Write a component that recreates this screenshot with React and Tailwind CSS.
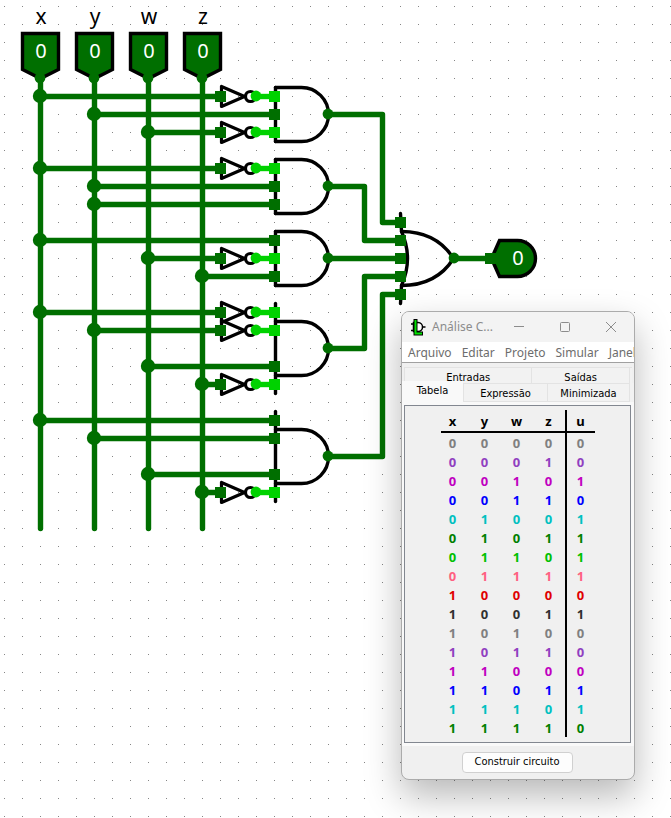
import React from "react";

const DARK = "#006f00";
const LIGHT = "#00d200";

const inputs = [
  { name: "x", x: 40 },
  { name: "y", x: 94 },
  { name: "w", x: 148 },
  { name: "z", x: 202 },
];

const gates = [
  { y: 114, from: 87, to: 141, pins: [["x", 96, true], ["y", 114, false], ["w", 132, true]] },
  { y: 186, from: 159, to: 213, pins: [["x", 168, true], ["y", 186, false], ["y", 204, false]] },
  { y: 258, from: 231, to: 285, pins: [["x", 240, false], ["w", 258, true], ["z", 276, false]] },
  { y: 348, from: 303, to: 393, pins: [["x", 312, true], ["y", 330, true], ["w", 366, false], ["z", 384, true]] },
  { y: 456, from: 411, to: 501, pins: [["x", 420, false], ["y", 438, false], ["w", 474, false], ["z", 492, true]] },
];

const links = [
  "M328 114H382V222H400",
  "M328 186H364V240H400",
  "M328 258H400",
  "M328 348H364V276H400",
  "M328 456H382V294H400",
  "M454 258H490",
];

const columnX = { x: 40, y: 94, w: 148, z: 202 };

function Pin({ x, y, color = DARK }) {
  return <rect x={x - 5} y={y - 5} width="11" height="11" fill={color} />;
}

function Inverter({ y }) {
  return (
    <g>
      <path d={`M221 ${y - 10}V${y + 10}L244 ${y}Z`} fill="none" stroke="#000" strokeWidth="3.2" strokeLinejoin="round" />
      <circle cx="250" cy={y} r="5" fill="none" stroke="#000" strokeWidth="3.2" />
    </g>
  );
}

function Circuit() {
  return (
    <svg className="block h-screen min-h-[818px] w-full" role="img" aria-label="Circuito">
      <defs>
        <pattern id="grid" width="18" height="18" patternUnits="userSpaceOnUse">
          <rect x="4" y="6" width="1" height="1" fill="#858585" />
        </pattern>
      </defs>
      <rect width="100%" height="100%" fill="#fff" />
      <rect width="100%" height="100%" fill="url(#grid)" />
      <g transform="translate(0.5 0.5)">
        <g fill="none" stroke="#000" strokeWidth="3.4" strokeLinecap="round" strokeLinejoin="round">
          {gates.map((g) => (
            <g key={g.y}>
              <path d={`M275 ${g.from}V${g.to}`} />
              <path d={`M275 ${g.y - 27}H301A27 27 0 0 1 301 ${g.y + 27}H275`} />
            </g>
          ))}
          <path d="M401 231Q436 231 453 258Q436 285 401 285" />
          <path d="M400 213L401 231Q413 258 401 285L400 303" />
        </g>
        {gates.map((g) => g.pins.filter((p) => p[2]).map((p) => <Inverter key={p[1]} y={p[1]} />))}
        {inputs.map((i) => (
          <path
            key={i.name}
            d={`M${i.x - 18} 33H${i.x + 18}V69L${i.x} 78L${i.x - 18} 69Z`}
            fill={DARK}
            stroke="#000"
            strokeWidth="3.4"
          />
        ))}
        <path d="M491 258L499 240H517A18 18 0 0 1 517 276H499Z" fill={DARK} stroke="#000" strokeWidth="3.4" />
        <g fill="none" stroke={DARK} strokeWidth="5.4" strokeLinecap="round" strokeLinejoin="round">
          {inputs.map((i) => (
            <path key={i.name} d={`M${i.x} 78V528`} />
          ))}
          {links.map((d) => (
            <path key={d} d={d} />
          ))}
          {gates.map((g) =>
            g.pins.map(([src, y, inverted]) => (
              <path key={y} d={`M${columnX[src]} ${y}H${inverted ? 220 : 274}`} />
            ))
          )}
        </g>
      </g>
      {inputs.map((i) => (
        <circle key={i.name} cx={i.x} cy="78" r="5.4" fill={DARK} />
      ))}
      {gates.map((g) => (
        <g key={g.y}>
          {g.pins.map(([src, y, inverted]) => (
            <g key={y}>
              <circle cx={columnX[src]} cy={y} r="7.2" fill={DARK} />
              {inverted && (
                <g>
                  <Pin x={220} y={y} />
                  <path d={`M256 ${y + 0.5}H274`} stroke={LIGHT} strokeWidth="5.4" />
                  <circle cx="256" cy={y} r="5.4" fill={LIGHT} />
                </g>
              )}
              <Pin x={274} y={y} color={inverted ? LIGHT : DARK} />
            </g>
          ))}
          <circle cx="328" cy={g.y} r="5.4" fill={DARK} />
        </g>
      ))}
      {[222, 240, 258, 276, 294].map((y) => (
        <Pin key={y} x={400} y={y} />
      ))}
      <circle cx="454" cy="258" r="5.4" fill={DARK} />
      <Pin x={490} y={258} />
      <g className="font-['Noto_Sans',sans-serif] text-[21px]" textAnchor="middle">
        {inputs.map((i) => (
          <g key={i.name}>
            <text x={i.x + 1} y="24">{i.name}</text>
            <text x={i.x + 1} y="58" fill="#fff" className="text-[20px]">0</text>
          </g>
        ))}
        <text x="518" y="265" fill="#fff" className="text-[20px]">0</text>
      </g>
    </svg>
  );
}

const rows = [
  ["00000", "text-[#808080]"],
  ["00010", "text-[#9040c0]"],
  ["00101", "text-[#c000c0]"],
  ["00110", "text-[#0000ff]"],
  ["01001", "text-[#00c0c0]"],
  ["01011", "text-[#008000]"],
  ["01101", "text-[#00c000]"],
  ["01111", "text-[#ff6080]"],
  ["10000", "text-[#e00000]"],
  ["10011", "text-[#303030]"],
  ["10100", "text-[#808080]"],
  ["10110", "text-[#9040c0]"],
  ["11000", "text-[#c000c0]"],
  ["11011", "text-[#0000ff]"],
  ["11101", "text-[#00c0c0]"],
  ["11110", "text-[#008000]"],
];

const cellClass = ["w-7 pr-1", "w-8", "w-8", "w-8", "w-[30px] border-l-2 border-black"];

function TruthTable() {
  return (
    <table className="mx-auto border-separate border-spacing-0 text-center font-['Noto_Sans',sans-serif] text-[13px] leading-[17px] font-bold">
      <thead>
        <tr>
          {["x", "y", "w", "z", "u"].map((h, i) => (
            <th key={h} className={`h-[23px] border-b-2 border-b-black pt-0.5 ${cellClass[i]}`}>{h}</th>
          ))}
        </tr>
      </thead>
      <tbody>
        {rows.map(([bits, color]) => (
          <tr key={bits} className={color}>
            {bits.split("").map((b, i) => (
              <td key={i} className={`h-[19px] pt-0.5 ${cellClass[i]}`}>{b}</td>
            ))}
          </tr>
        ))}
      </tbody>
    </table>
  );
}

function AppIcon() {
  return (
    <svg width="16" height="18" viewBox="0 0 16 18" fill="none" aria-hidden="true">
      <path d="M3.5 4.5H8C14 4.5 14 13.5 8 13.5H3.5Z" fill="#fff" stroke="#000" strokeWidth="1.5" />
      <path d="M1 6H3.5M1 12.5H3.5M12.5 9H15.5" stroke="#000" strokeWidth="1.5" />
      <path d="M5.5 1V15.5H13" stroke="#000" strokeWidth="4" />
      <path d="M5.5 2V15.5H12" stroke="#00e000" strokeWidth="2" />
    </svg>
  );
}

function AnalysisWindow() {
  return (
    <section className="absolute top-[311px] left-[401px] flex w-[234px] flex-col overflow-hidden rounded-lg border border-[#ababab] bg-[#f0f0f0] shadow-[0_16px_36px_rgba(0,0,0,0.28)]">
      <header className="flex h-[30px] items-center bg-[#f3f3f3] pl-2 text-[#8c8c8c]">
        <AppIcon />
        <h1 className="ml-1.5 flex-1 font-['Noto_Sans',sans-serif] text-xs whitespace-nowrap">Análise C...</h1>
        <button type="button" aria-label="Minimizar" className="flex h-full w-[46px] items-center justify-center">
          <svg width="10" height="10" stroke="currentColor"><path d="M0 4.5H10" /></svg>
        </button>
        <button type="button" aria-label="Maximizar" className="flex h-full w-[46px] items-center justify-center">
          <svg width="10" height="10" fill="none" stroke="currentColor"><rect x="0.5" y="0.5" width="9" height="9" rx="1" /></svg>
        </button>
        <button type="button" aria-label="Fechar" className="flex h-full w-[46px] items-center justify-center">
          <svg width="10" height="10" stroke="currentColor"><path d="M0 0L10 10M10 0L0 10" /></svg>
        </button>
      </header>
      <nav className="flex h-[21px] items-center gap-2.5 overflow-hidden border-b border-[#a0a0a0] bg-white pt-0.5 pl-1.5 font-['Noto_Sans',sans-serif] text-xs whitespace-nowrap text-[#6d6d6d]">
        {["Arquivo", "Editar", "Projeto", "Simular", "Janela"].map((m) => (
          <button type="button" key={m}>{m}</button>
        ))}
      </nav>
      <div className="flex flex-col pt-1 font-['DejaVu_Sans_Condensed','DejaVu_Sans',sans-serif] text-[11px]" role="tablist">
        <div className="mx-0.5 flex h-4 border-t border-l border-[#e3e3e3] bg-[#f2f2f2]">
          <button type="button" role="tab" className="flex-[128] border-r border-[#e3e3e3] pt-0.5">Entradas</button>
          <button type="button" role="tab" className="mr-0.5 flex-[98] border-r border-[#e3e3e3] pt-0.5">Saídas</button>
        </div>
        <div className="flex h-[19px] bg-[#f2f2f2]">
          <button type="button" role="tab" aria-selected="true" className="-mt-0.5 w-[61px] bg-[#f9f9f9]">Tabela</button>
          <button type="button" role="tab" className="w-[84px] border-y border-l border-[#e3e3e3] pt-0.5">Expressão</button>
          <button type="button" role="tab" className="mr-1 flex-1 border border-[#e3e3e3] pt-0.5">Minimizada</button>
        </div>
      </div>
      <div className="bg-[#f9f9f9] pt-[3px] pr-[3px] pb-[3px] pl-0.5">
        <div className="border border-[#828790] bg-[#f0f0f0] pt-1 pb-[5px]">
          <TruthTable />
        </div>
      </div>
      <div className="flex justify-center pt-1.5 pb-1.5">
        <button type="button" className="mr-0.5 h-[21px] w-[111px] rounded border border-[#d0d0d0] bg-[#fdfdfd] font-['DejaVu_Sans_Condensed','DejaVu_Sans',sans-serif] text-[11px]">Construir circuito</button>
      </div>
    </section>
  );
}

export default function App() {
  return (
    <main className="relative overflow-hidden bg-white text-black">
      <Circuit />
      <AnalysisWindow />
    </main>
  );
}
